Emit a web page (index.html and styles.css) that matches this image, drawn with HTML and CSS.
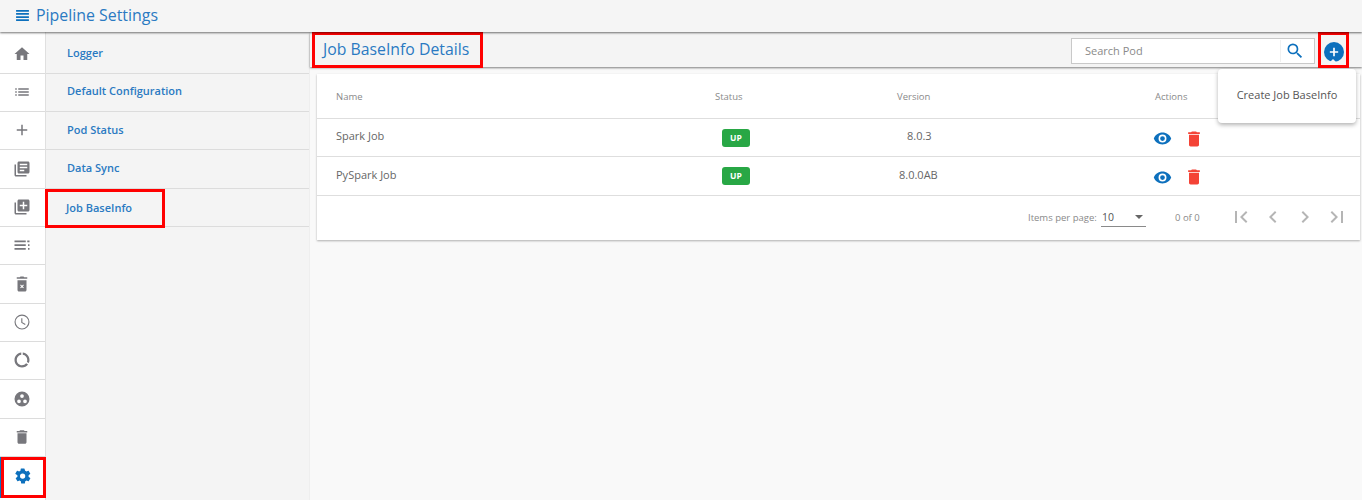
FILE: index.html
```html
<!DOCTYPE html>
<html lang="en">
<head>
<meta charset="utf-8">
<title>Pipeline Settings</title>
<link rel="stylesheet" href="styles.css">
</head>
<body>
<header class="topbar">
  <svg class="menu-icon" viewBox="0 0 14 12"><path d="M0 0h14v2H0zM0 3.300h14v2H0zM0 6.700h14v2H0zM0 10h14v2H0z"/></svg>
  <span class="topbar-title">Pipeline Settings</span>
</header>
<div class="shell">
  <nav class="rail">
    <a class="rail-item"><svg viewBox="0 0 24 24"><path d="M10 20v-6h4v6h5v-8h3L12 3 2 12h3v8z"/></svg></a>
    <a class="rail-item"><svg viewBox="0 0 24 24"><path d="M3 13h2v-2H3zm0 4h2v-2H3zm0-8h2V7H3zm4 4h14v-2H7zm0 4h14v-2H7zM7 7v2h14V7z"/></svg></a>
    <a class="rail-item"><svg viewBox="0 0 24 24"><path d="M19 13h-6v6h-2v-6H5v-2h6V5h2v6h6z"/></svg></a>
    <a class="rail-item"><svg viewBox="0 0 24 24"><path d="M4 6H2v14c0 1.100.9 2 2 2h14v-2H4zm16-4H8c-1.100 0-2 .9-2 2v12c0 1.100.9 2 2 2h12c1.100 0 2-.9 2-2V4c0-1.100-.9-2-2-2zm-1 9H9V9h10zm-4 4H9v-2h6zm4-8H9V5h10z"/></svg></a>
    <a class="rail-item"><svg viewBox="0 0 24 24"><path d="M4 6H2v14c0 1.100.9 2 2 2h14v-2H4zm16-4H8c-1.100 0-2 .9-2 2v12c0 1.100.9 2 2 2h12c1.100 0 2-.9 2-2V4c0-1.100-.9-2-2-2zm-1 9h-4v4h-2v-4H9V9h4V5h2v4h4z"/></svg></a>
    <a class="rail-item"><svg viewBox="0 0 24 24"><path d="M2 6h15v2.300H2zm0 5h15v2.300H2zm0 5h15v2.300H2zM19 6h3v2.300h-3zm1 5h2v2.300h-2zm0 5h2v2.300h-2z"/></svg></a>
    <a class="rail-item"><svg viewBox="0 0 24 24"><path d="M15 3l-1-1h-4L9 3H5v2h14V3zM6 7v13c0 1.100.9 2 2 2h8c1.100 0 2-.9 2-2V7zm8.500 9.800l-1 1-1.500-1.500-1.500 1.500-1-1 1.500-1.500-1.500-1.500 1-1 1.500 1.500 1.500-1.500 1 1-1.500 1.500z"/></svg></a>
    <a class="rail-item"><svg viewBox="0 0 24 24"><path d="M12 2a10 10 0 1 0 0 20 10 10 0 0 0 0-20zm0 18.500a8.500 8.500 0 1 1 0-17 8.500 8.500 0 0 1 0 17zM12.500 7H11v6l5 3 .8-1.200-4.300-2.500z"/></svg></a>
    <a class="rail-item"><svg viewBox="0 0 24 24"><path d="M13 2.050v3.030c3.390.49 6 3.390 6 6.920 0 .9-.18 1.750-.48 2.540l2.600 1.530c.56-1.240.88-2.620.88-4.070 0-5.180-3.950-9.450-9-9.950zM12 19c-3.870 0-7-3.130-7-7 0-3.530 2.610-6.430 6-6.920V2.050c-5.060.5-9 4.760-9 9.950 0 5.520 4.470 10 9.990 10 3.310 0 6.240-1.610 8.060-4.090l-2.600-1.530C16.170 17.980 14.210 19 12 19z"/></svg></a>
    <a class="rail-item"><svg viewBox="0 0 24 24"><path fill-rule="evenodd" d="M12 2a10 10 0 1 0 0 20 10 10 0 0 0 0-20zm0 3.500a2.500 2.500 0 1 1 0 5 2.500 2.500 0 0 1 0-5zM8 12.500a2.500 2.500 0 1 1 0 5 2.500 2.500 0 0 1 0-5zm8 0a2.500 2.500 0 1 1 0 5 2.500 2.500 0 0 1 0-5z"/></svg></a>
    <a class="rail-item"><svg viewBox="0 0 24 24"><path d="M6 19c0 1.100.9 2 2 2h8c1.100 0 2-.9 2-2V7H6zM19 4h-3.500l-1-1h-5l-1 1H5v2h14z"/></svg></a>
    <a class="rail-item rail-item-active"><svg viewBox="0 0 24 24"><path d="M19.400 13c.04-.3.1-.7.1-1s-.06-.7-.1-1l2.100-1.600c.2-.15.25-.4.12-.64l-2-3.460c-.12-.22-.4-.3-.6-.22l-2.500 1c-.52-.4-1.080-.73-1.700-.98L14 2.400a.5.500 0 0 0-.5-.4h-4a.5.500 0 0 0-.5.4l-.37 2.700c-.6.250-1.170.580-1.700.980l-2.500-1c-.22-.08-.5 0-.6.220l-2 3.460c-.13.220-.07.480.12.640L4.600 11c-.04.3-.1.7-.1 1s.06.7.1 1l-2.100 1.600c-.2.150-.25.400-.12.640l2 3.460c.12.220.4.300.6.220l2.500-1c.52.400 1.080.730 1.700.980l.37 2.700c.04.240.25.400.5.400h4c.25 0 .46-.16.500-.4l.37-2.700c.6-.25 1.170-.58 1.700-.98l2.500 1c.22.080.5 0 .6-.22l2-3.460c.13-.22.07-.48-.12-.64zM11.500 15.500a3.500 3.500 0 1 1 0-7 3.500 3.500 0 0 1 0 7z"/></svg></a>
  </nav>
  <aside class="sidebar">
    <a class="side-item"><span class="side-link">Logger</span></a>
    <a class="side-item"><span class="side-link">Default Configuration</span></a>
    <a class="side-item"><span class="side-link">Pod Status</span></a>
    <a class="side-item"><span class="side-link">Data Sync</span></a>
    <a class="side-item"><span class="side-link side-link-marked">Job BaseInfo</span></a>
  </aside>
  <main class="main">
    <div class="subbar">
      <h1 class="page-title">Job BaseInfo Details</h1>
      <div class="search">
        <span class="search-text">Search Pod</span>
        <span class="search-btn"><svg viewBox="0 0 24 24"><path d="M15.500 14h-.79l-.28-.27A6.471 6.471 0 0 0 16 9.500 6.500 6.500 0 1 0 9.500 16c1.610 0 3.090-.59 4.230-1.570l.27.28v.79l5 4.990L20.490 19l-4.990-5zm-6 0C7.010 14 5 11.990 5 9.500S7.010 5 9.500 5 14 7.010 14 9.500 11.990 14 9.500 14z"/></svg></span>
      </div>
      <div class="add-box"><span class="add-btn"><svg viewBox="0 0 12 12"><path d="M5 1h2v4h4v2H7v4H5V7H1V5h4z"/></svg></span></div>
    </div>
    <section class="card">
      <div class="row row-head">
        <span class="c-name">Name</span>
        <span class="c-status">Status</span>
        <span class="c-version">Version</span>
        <span class="c-actions">Actions</span>
      </div>
      <div class="row">
        <span class="c-name">Spark Job</span>
        <span class="c-status"><b class="badge">UP</b></span>
        <span class="c-version c-v1">8.0.3</span>
        <span class="c-actions icons">
          <svg class="eye" viewBox="0 0 24 24"><path d="M12 4.500C7 4.500 2.700 7.600 1 12c1.700 4.400 6 7.500 11 7.500s9.300-3.100 11-7.500c-1.700-4.400-6-7.500-11-7.500zM12 17a5 5 0 1 1 0-10 5 5 0 0 1 0 10zm0-8a3 3 0 1 0 0 6 3 3 0 0 0 0-6z"/></svg>
          <svg class="trash" viewBox="0 0 24 24"><path d="M6 19c0 1.100.9 2 2 2h8c1.100 0 2-.9 2-2V7H6zM19 4h-3.500l-1-1h-5l-1 1H5v2h14z"/></svg>
        </span>
      </div>
      <div class="row">
        <span class="c-name">PySpark Job</span>
        <span class="c-status"><b class="badge">UP</b></span>
        <span class="c-version c-v2">8.0.0AB</span>
        <span class="c-actions icons">
          <svg class="eye" viewBox="0 0 24 24"><path d="M12 4.500C7 4.500 2.700 7.600 1 12c1.700 4.400 6 7.500 11 7.500s9.300-3.100 11-7.500c-1.700-4.400-6-7.500-11-7.500zM12 17a5 5 0 1 1 0-10 5 5 0 0 1 0 10zm0-8a3 3 0 1 0 0 6 3 3 0 0 0 0-6z"/></svg>
          <svg class="trash" viewBox="0 0 24 24"><path d="M6 19c0 1.100.9 2 2 2h8c1.100 0 2-.9 2-2V7H6zM19 4h-3.500l-1-1h-5l-1 1H5v2h14z"/></svg>
        </span>
      </div>
      <div class="pager">
        <span class="pager-label">Items per page:</span>
        <span class="pager-select"><span>10</span><i class="caret"></i></span>
        <span class="pager-range">0 of 0</span>
        <span class="pager-btns">
          <svg viewBox="0 0 24 24"><path d="M18.400 16.600L13.800 12l4.600-4.600L17 6l-6 6 6 6zM6 6h2v12H6z"/></svg>
          <svg viewBox="0 0 24 24"><path d="M15.400 7.400L14 6l-6 6 6 6 1.400-1.400L10.800 12z"/></svg>
          <svg viewBox="0 0 24 24"><path d="M10 6L8.600 7.400 13.200 12l-4.600 4.600L10 18l6-6z"/></svg>
          <svg viewBox="0 0 24 24"><path d="M5.600 7.400L10.200 12l-4.600 4.600L7 18l6-6-6-6zM16 6h2v12h-2z"/></svg>
        </span>
      </div>
    </section>
    <div class="popup">Create Job BaseInfo</div>
  </main>
</div>
</body>
</html>
```

FILE: styles.css
```css
* { box-sizing: border-box; }
html, body { margin: 0; height: 100%; overflow: hidden; }
body {
  font-family: "Open Sans", "Liberation Sans", sans-serif;
  background: #f9f9f9;
  color: #555;
  display: flex;
  flex-direction: column;
}
.topbar {
  height: 32px;
  flex: none;
  display: flex;
  align-items: center;
  gap: 7px;
  padding: 0 0 2px 16px;
  background: #f5f5f5;
  box-shadow: 0 1px 2px rgba(0,0,0,.55);
  position: relative;
  z-index: 3;
}
.menu-icon { width: 13px; height: 11px; fill: #0d70bd; }
.topbar-title { font-size: 15.900px; color: #2a7ac2; }
.shell { flex: 1; display: flex; min-height: 0; }
.rail {
  width: 46px;
  flex: none;
  background: #fff;
  border-right: 1px solid #e0e0e0;
  padding-top: 3.500px;
}
.rail-item {
  display: flex;
  height: 38.330px;
  align-items: center;
  justify-content: center;
  padding: 0 1px 1px 0;
  border-bottom: 1px solid #dcdcdc;
}
.rail-item svg { width: 18px; height: 18px; fill: #77777c; }
.rail-item-active {
  height: 41px;
  margin: 0 -1px 0 1px;
  padding: 0 1px 3px 0;
  border: 3px solid #f00;
  box-shadow: -1px 0 0 #0d70bd;
  position: relative;
}
.rail-item-active svg { fill: #0d70bd; }
.sidebar {
  width: 264px;
  flex: none;
  background: #f4f4f4;
  border-right: 1px solid #eee;
  padding-top: 3.500px;
}
.side-item {
  display: flex;
  height: 38.330px;
  border-bottom: 1px solid #dcdcdc;
}
.side-link {
  font-size: 11px;
  font-weight: 600;
  color: #2a7ac2;
  padding: 0 0 3px 21px;
  display: flex;
  align-items: center;
}
.side-link-marked {
  width: 120px;
  height: 39px;
  margin-left: -1px;
  padding: 0 0 2px 18px;
  border: 3px solid #f00;
}
.main { flex: 1; min-width: 0; position: relative; }
.subbar {
  height: 34px;
  margin-top: 1px;
  display: flex;
  align-items: center;
  padding-left: 2px;
  background: #f4f4f4;
  box-shadow: 0 1px 2px rgba(0,0,0,.5);
  position: relative;
  z-index: 2;
}
.page-title {
  margin: 0;
  width: 171px;
  height: 36px;
  border: 3px solid #f00;
  padding-left: 8px;
  font-size: 15.800px;
  font-weight: 400;
  line-height: 28px;
  color: #2a7ac2;
  white-space: nowrap;
}
.search {
  margin: 2px 0 0 auto;
  width: 244px;
  height: 26px;
  display: flex;
  align-items: center;
  background: #fff;
  border: 1px solid #c9c9c9;
  padding-left: 13px;
}
.search-text { flex: 1; font-size: 11px; color: #8a8a8a; padding-bottom: 1px; }
.search-btn {
  width: 34px;
  height: 22px;
  border-left: 1px solid #f0f0f0;
  display: flex;
  align-items: center;
  justify-content: center;
  padding-right: 5px;
}
.search-btn svg { width: 20px; height: 20px; fill: #0d70bd; }
.add-box {
  width: 31px;
  height: 36px;
  margin: 0 13px 0 3px;
  padding-top: 3px;
  border: 3px solid #f00;
  display: flex;
  align-items: center;
  justify-content: center;
  position: relative;
}
.add-box::after {
  content: "";
  position: absolute;
  left: 6px;
  bottom: 0;
  border: 6px solid transparent;
  border-top: 0;
  border-bottom: 6px solid #f6f6f6;
}
.add-btn {
  width: 20px;
  height: 20px;
  border-radius: 50%;
  background: #0d70bd;
  display: flex;
  align-items: center;
  justify-content: center;
}
.add-btn svg { width: 10px; height: 10px; fill: #fff; }
.card {
  margin: 7px 2px 0 7px;
  height: 166px;
  background: #fff;
  box-shadow: 0 1px 2px rgba(0,0,0,.3);
}
.row {
  display: grid;
  grid-template-columns: 379px 182px 258px 1fr;
  height: 38.400px;
  align-items: center;
  border-bottom: 1px solid #dedede;
  font-size: 11px;
  padding-left: 19px;
  color: #666;
}
.row .c-name, .row .c-version { padding-bottom: 4px; }
.row-head { height: 45px; font-size: 9.500px; color: #8a8a8a; }
.row-head > span { padding-bottom: 0; }
.row.row-head .c-name, .row.row-head .c-version { padding-bottom: 0; }
.c-v1 { padding-left: 10px; }
.c-v2 { padding-left: 2px; }
.badge {
  display: block;
  width: 28px;
  height: 18px;
  margin-left: 7px;
  border-radius: 3px;
  background: #28a745;
  color: #fff;
  font-size: 8.500px;
  line-height: 18px;
  text-align: center;
}
.icons { display: flex; align-items: center; gap: 12px; padding-top: 2px; margin-left: -2px; }
.eye { width: 19px; height: 19px; fill: #0d70bd; }
.trash { width: 20px; height: 20px; fill: #f44336; }
.pager {
  display: flex;
  align-items: center;
  height: 44px;
  padding: 0 0 1px 711px;
  font-size: 9.500px;
  color: #8a8a8a;
}
.pager-label { width: 67px; white-space: nowrap; }
.pager-select {
  width: 45px;
  height: 20px;
  margin-left: 6px;
  display: flex;
  align-items: center;
  justify-content: space-between;
  padding: 0 3px 0 1px;
  border-bottom: 1px solid #8a8a8a;
  font-size: 10.500px;
  color: #555;
}
.caret { width: 0; height: 0; border: 4px solid transparent; border-top: 4px solid #666; border-bottom: 0; }
.pager-range { margin-left: 29px; width: 30px; }
.pager-btns { display: flex; gap: 8px; margin-left: 24px; }
.pager-btns svg { width: 24px; height: 24px; fill: #b5b5b5; }
.popup {
  position: absolute;
  top: 37px;
  right: 6px;
  width: 138px;
  height: 54px;
  padding-bottom: 3px;
  background: #fff;
  border-radius: 4px;
  box-shadow: 0 2px 4px rgba(0,0,0,.3);
  display: flex;
  align-items: center;
  justify-content: center;
  font-size: 11px;
  color: #555;
  z-index: 3;
}
```
